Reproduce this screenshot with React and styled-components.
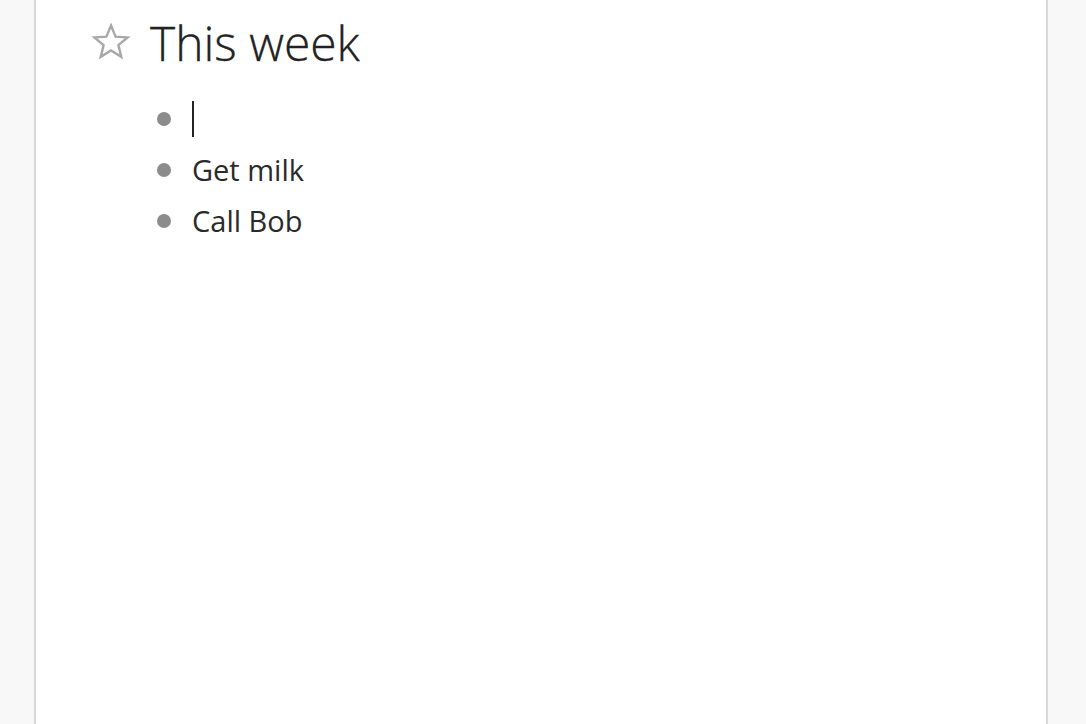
import styled, { createGlobalStyle } from 'styled-components';

const GlobalStyle = createGlobalStyle`
  html, body {
    margin: 0;
    padding: 0;
    background: #f8f8f8;
    font-family: "Open Sans", "Noto Sans", sans-serif;
  }
`;

const Page = styled.div`
  display: flex;
  padding-left: 34px;
  min-height: 100vh;
  box-sizing: border-box;
`;

const Sheet = styled.main`
  width: 1014px;
  min-height: 100vh;
  box-sizing: border-box;
  background: #ffffff;
  border-left: 2px solid #d9d9d9;
  border-right: 2px solid #d9d9d9;
  padding: 12px 0 0 55px;
`;

const TitleRow = styled.div`
  display: flex;
  align-items: center;
  gap: 19px;
  height: 60px;
`;

const Title = styled.h1`
  margin: 0;
  font-size: 48px;
  font-weight: 300;
  color: #222;
  -webkit-text-stroke: 0.3px #222;
`;

const List = styled.ul`
  list-style: none;
  margin: 21px 0 0 0;
  padding: 0 0 0 66px;
`;

const Item = styled.li`
  display: flex;
  align-items: center;
  gap: 21px;
  height: 51px;
  font-size: 29px;
  color: #2a2a2a;
`;

const Bullet = styled.span`
  width: 14px;
  height: 14px;
  border-radius: 50%;
  background: #8c8c8c;
  flex-shrink: 0;
`;

const Caret = styled.span`
  width: 2px;
  height: 36px;
  background: #222;
`;

function Star() {
  return (
    <svg width="40" height="38" viewBox="0 0 40 38">
      <path
        d="M20 2.5 L24.6 13.6 L36.6 14.4 L27.4 22.1 L30.3 33.8 L20 27.4 L9.7 33.8 L12.6 22.1 L3.4 14.4 L15.4 13.6 Z"
        fill="none"
        stroke="#a8a8a8"
        strokeWidth="2.4"
        strokeLinejoin="miter"
      />
    </svg>
  );
}

const items = ['Get milk', 'Call Bob'];

export default function App() {
  return (
    <>
      <GlobalStyle />
      <Page>
        <Sheet>
          <TitleRow>
            <Star />
            <Title>This week</Title>
          </TitleRow>
          <List>
            <Item>
              <Bullet />
              <Caret />
            </Item>
            {items.map((t) => (
              <Item key={t}>
                <Bullet />
                {t}
              </Item>
            ))}
          </List>
        </Sheet>
      </Page>
    </>
  );
}
